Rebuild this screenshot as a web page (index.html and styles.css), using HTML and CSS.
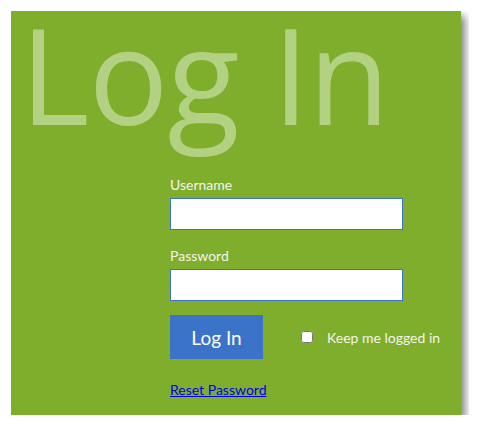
FILE: index.html
```html
<!DOCTYPE html>
<html lang="en">
<head>
    <meta charset="utf-8" />
    <title>Log In</title>
    <link rel="stylesheet" href="styles.css">
</head>
<body>
    <div class="panel">
        <h1>Log In</h1>
        <form class="login">
            <label for="user">Username</label>
            <input type="text" id="user" class="field">
            <label for="pass">Password</label>
            <input type="password" id="pass" class="field">
            <div class="actions">
                <button type="button" class="submit">Log In</button>
                <label class="remember"><input type="checkbox"> Keep me logged in</label>
            </div>
            <a href="#" class="reset">Reset Password</a>
        </form>
    </div>
</body>
</html>
```
FILE: styles.css
```css
body {
    margin: 11px;
    background-color: white;
    font-family: Lato, sans-serif;
}

.panel {
    width: 450px;
    height: 404px;
    background-color: #7fad2c;
    box-shadow: 4px 5px 8px rgba(0, 0, 0, 0.5);
    overflow: hidden;
}

h1 {
    margin: 0;
    padding-left: 9px;
    font-family: "Open Sans", sans-serif;
    font-weight: normal;
    font-size: 133px;
    letter-spacing: -1px;
    line-height: 126px;
    color: #b3d183;
    height: 160px;
    white-space: nowrap;
}

.login {
    display: flex;
    flex-direction: column;
    align-items: flex-start;
    padding-left: 159px;
    margin-top: 5px;
}

.login > label {
    color: #f4f4f0;
    font-size: 14px;
    line-height: 17px;
    margin-bottom: 5px;
}

.field {
    box-sizing: border-box;
    width: 233px;
    height: 32px;
    margin: 0 0 17px 0;
    border: 1px solid #3a73d0;
    background: white;
}

.actions {
    display: flex;
    align-items: center;
    margin-top: -3px;
}

.submit {
    width: 93px;
    height: 44px;
    border: none;
    background-color: #3a73c8;
    color: white;
    font-family: Lato, sans-serif;
    font-size: 19px;
}

.remember {
    color: #f4f4f0;
    font-size: 14px;
    margin-left: 38px;
    display: flex;
    align-items: center;
}

.remember input {
    margin: 0 14px 0 0;
    width: 12px;
    height: 12px;
}

.reset {
    margin-top: 22px;
    font-size: 14px;
    color: #0000ee;
}
```
